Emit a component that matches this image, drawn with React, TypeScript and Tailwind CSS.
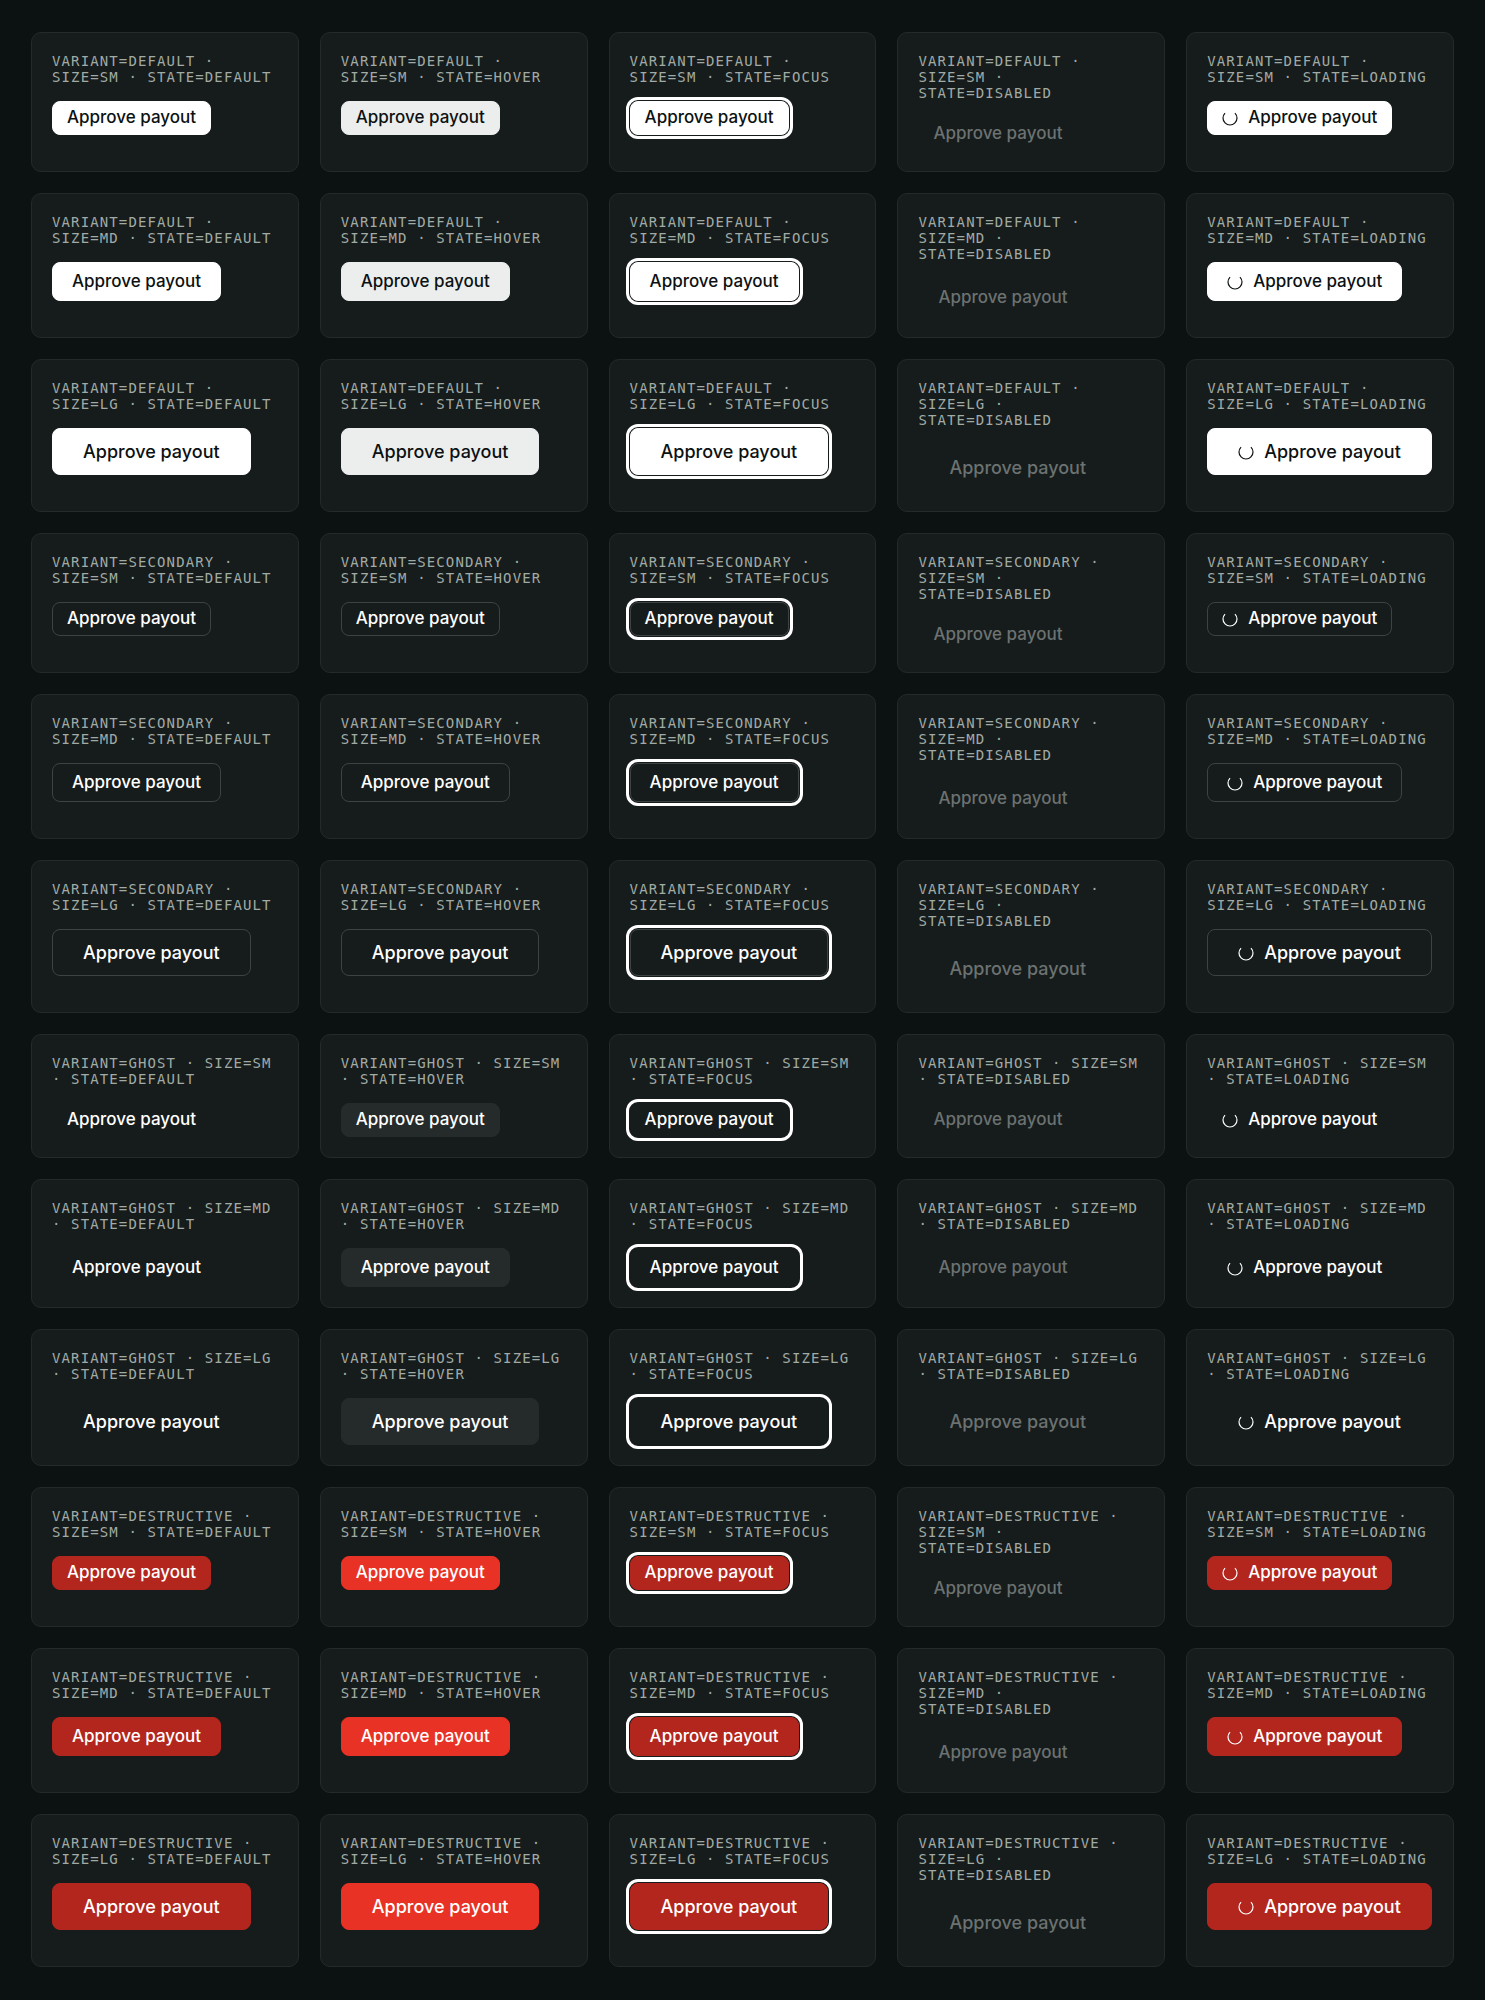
type Variant = 'default' | 'secondary' | 'ghost' | 'destructive';
type Size = 'sm' | 'md' | 'lg';
type State = 'default' | 'hover' | 'focus' | 'disabled' | 'loading';

const variants: Variant[] = ['default', 'secondary', 'ghost', 'destructive'];
const sizes: Size[] = ['sm', 'md', 'lg'];
const states: State[] = ['default', 'hover', 'focus', 'disabled', 'loading'];

const sizeClass: Record<Size, string> = {
  sm: 'h-[34px] px-[14px] text-[17px]',
  md: 'h-[39px] px-[19px] text-[17px]',
  lg: 'h-[47px] px-[30px] text-[18px]',
};

const variantClass: Record<Variant, string> = {
  default: 'border-white bg-white text-[#0c1111]',
  secondary: 'border-[#3d4242] text-white',
  ghost: 'border-transparent text-white',
  destructive: 'border-[#b3261e] bg-[#b3261e] text-white',
};

const hoverClass: Record<Variant, string> = {
  default: 'border-[#eceeee] bg-[#eceeee] text-[#0c1111]',
  secondary: 'border-[#3d4242] text-white',
  ghost: 'border-[#252a2a] bg-[#252a2a] text-white',
  destructive: 'border-[#e83225] bg-[#e83225] text-white',
};

function Spinner() {
  return (
    <svg className="size-4 shrink-0" viewBox="0 0 16 16" fill="none" stroke="currentColor" strokeWidth="1.2" aria-hidden="true">
      <path d="M3.05 3.05A7 7 0 1 0 12.95 3.05" />
    </svg>
  );
}

function Button({ variant, size, state }: { variant: Variant; size: Size; state: State }) {
  const look =
    state === 'disabled'
      ? 'border-transparent text-[#6b7271]'
      : state === 'hover'
        ? hoverClass[variant]
        : variantClass[variant];
  const ring = state === 'focus' ? 'outline-[3px] outline-offset-1 outline-white' : '';
  return (
    <button
      type="button"
      disabled={state === 'disabled'}
      aria-busy={state === 'loading'}
      className={`inline-flex items-center justify-center gap-[10px] rounded-lg border font-medium whitespace-nowrap ${sizeClass[size]} ${look} ${ring}`}
    >
      {state === 'loading' && <Spinner />}
      Approve payout
    </button>
  );
}

export default function App() {
  return (
    <main className="min-h-screen bg-[#0c1111] px-[31px] py-8 font-['Inter',sans-serif]">
      <div className="grid grid-cols-5 gap-[21px]">
        {variants.flatMap((variant) =>
          sizes.flatMap((size) =>
            states.map((state) => (
              <section
                key={`${variant}-${size}-${state}`}
                className="flex flex-col items-start gap-4 rounded-[10px] border border-[#242929] bg-[#161b1b] p-5"
              >
                <h2 className="font-['DejaVu_Sans_Mono',monospace] text-[14px] leading-4 tracking-[0.08em] text-[#a1aba6] uppercase">
                  {`variant=${variant} · size=${size} · state=${state}`}
                </h2>
                <Button variant={variant} size={size} state={state} />
              </section>
            )),
          ),
        )}
      </div>
    </main>
  );
}
